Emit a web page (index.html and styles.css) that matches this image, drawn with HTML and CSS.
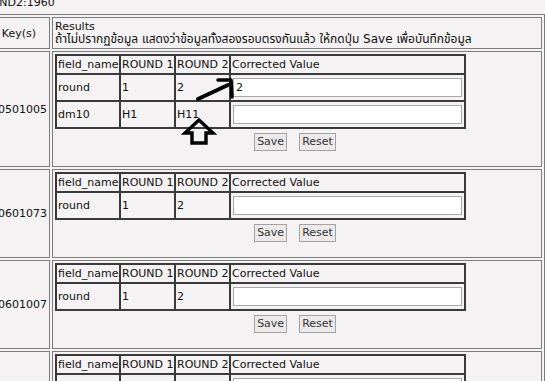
FILE: index.html
```html
<!DOCTYPE html>
<html lang="th">
<head>
<meta charset="utf-8">
<title>Compare rounds</title>
<link rel="stylesheet" href="styles.css">
</head>
<body>
<div class="page">
  <div class="title">ROUND2:1960</div>
  <table class="outer">
    <tr>
      <th class="key head-key">Key(s)</th>
      <th class="res head-res">Results<br><span class="thai">ถ้าไม่ปรากฏข้อมูล แสดงว่าข้อมูลทั้งสองรอบตรงกันแล้ว ให้กดปุ่ม Save เพื่อบันทึกข้อมูล</span></th>
    </tr>
    <tr>
      <td class="key">10501005</td>
      <td class="res">
        <form class="entry">
          <table class="grid">
            <tr><th class="c1">field_name</th><th class="c2">ROUND 1</th><th class="c3">ROUND 2</th><th class="c4">Corrected Value</th></tr>
            <tr><td>round</td><td>1</td><td>2</td><td><input class="val" type="text" value="2"></td></tr>
            <tr><td>dm10</td><td>H1</td><td>H11</td><td><input class="val" type="text" value=""></td></tr>
          </table>
          <div class="actions"><button type="button" class="btn">Save</button><button type="reset" class="btn">Reset</button></div>
        </form>
      </td>
    </tr>
    <tr>
      <td class="key">10601073</td>
      <td class="res">
        <form class="entry">
          <table class="grid">
            <tr><th class="c1">field_name</th><th class="c2">ROUND 1</th><th class="c3">ROUND 2</th><th class="c4">Corrected Value</th></tr>
            <tr><td>round</td><td>1</td><td>2</td><td><input class="val" type="text" value=""></td></tr>
          </table>
          <div class="actions"><button type="button" class="btn">Save</button><button type="reset" class="btn">Reset</button></div>
        </form>
      </td>
    </tr>
    <tr>
      <td class="key">10601007</td>
      <td class="res">
        <form class="entry">
          <table class="grid">
            <tr><th class="c1">field_name</th><th class="c2">ROUND 1</th><th class="c3">ROUND 2</th><th class="c4">Corrected Value</th></tr>
            <tr><td>round</td><td>1</td><td>2</td><td><input class="val" type="text" value=""></td></tr>
          </table>
          <div class="actions"><button type="button" class="btn">Save</button><button type="reset" class="btn">Reset</button></div>
        </form>
      </td>
    </tr>
    <tr>
      <td class="key">10601011</td>
      <td class="res">
        <form class="entry">
          <table class="grid">
            <tr><th class="c1">field_name</th><th class="c2">ROUND 1</th><th class="c3">ROUND 2</th><th class="c4">Corrected Value</th></tr>
            <tr><td>round</td><td>1</td><td>2</td><td><input class="val" type="text" value=""></td></tr>
          </table>
          <div class="actions"><button type="button" class="btn">Save</button><button type="reset" class="btn">Reset</button></div>
        </form>
      </td>
    </tr>
  </table>
</div>
<svg class="marks" width="545" height="381" viewBox="0 0 545 381" aria-hidden="true">
  <line x1="198" y1="99" x2="228" y2="85" stroke="#000" stroke-width="4" stroke-linecap="round"/>
  <polyline points="218,80 231,80 232,97" fill="none" stroke="#000" stroke-width="3.5" stroke-linejoin="round" stroke-linecap="round"/>
  <polygon points="199,120 185,133 192,133 192,143 206,143 206,133 213,133" fill="none" stroke="#000" stroke-width="3.4" stroke-linejoin="miter"/>
</svg>
</body>
</html>
```
FILE: styles.css
```css
html, body {
  margin: 0;
  padding: 0;
}
body {
  background: #f4f2f2;
  font-family: "DejaVu Sans", "Noto Sans Thai", "Noto Sans", "Liberation Sans", sans-serif;
  font-size: 11px;
  color: #111;
  overflow: hidden;
  width: 545px;
  height: 381px;
}
.page {
  margin: -4px 0 0 -15px;
}
.title {
  line-height: 13px;
  margin: 0 0 5px -10px;
  white-space: nowrap;
}
.outer {
  border: 1px solid #7d7d7d;
  border-spacing: 2px;
  border-collapse: separate;
}
.outer > tbody > tr > th,
.outer > tbody > tr > td {
  border: 1px solid #7d7d7d;
  padding: 2px;
  font-weight: normal;
}
.key {
  width: 56px;
  white-space: nowrap;
  vertical-align: middle;
  text-align: left;
}
.head-key {
  text-align: center;
}
.res {
  width: 484px;
  vertical-align: top;
  text-align: left;
}
.head-res {
  line-height: 13px;
  white-space: nowrap;
}
.thai {
  font-size: 12px;
}
.entry {
  margin: 0 0 13px 0;
}
.grid {
  table-layout: fixed;
  width: 411px;
  border-collapse: separate;
  border-spacing: 0;
  border: 1px solid #3a3a3a;
}
.grid th,
.grid td {
  border: 1px solid #3a3a3a;
  padding: 1px;
  text-align: left;
  font-weight: normal;
  line-height: 15px;
  white-space: nowrap;
  overflow: hidden;
  vertical-align: middle;
}
.c1 { width: 60px; }
.c2 { width: 51px; }
.c3 { width: 51px; }
.c4 { width: 231px; }
.val {
  display: block;
  box-sizing: border-box;
  width: 229px;
  height: 19px;
  margin: 2px 0 2px 1px;
  padding: 0 2px;
  border: 1px solid #a9a9a9;
  background: #fff;
  font-family: inherit;
  font-size: 11px;
  color: #111;
  outline: none;
}
.actions {
  display: flex;
  justify-content: center;
  gap: 12px;
  margin: 4px 4px 0 0;
}
.btn {
  box-sizing: border-box;
  height: 18px;
  padding: 0 2px;
  margin: 0;
  border: 1px solid #a3a3a3;
  border-radius: 0;
  background: #ebe9e9;
  font-family: inherit;
  font-size: 11px;
  line-height: 16px;
  color: #333;
}
.marks {
  position: absolute;
  left: 0;
  top: 0;
  pointer-events: none;
}
```
